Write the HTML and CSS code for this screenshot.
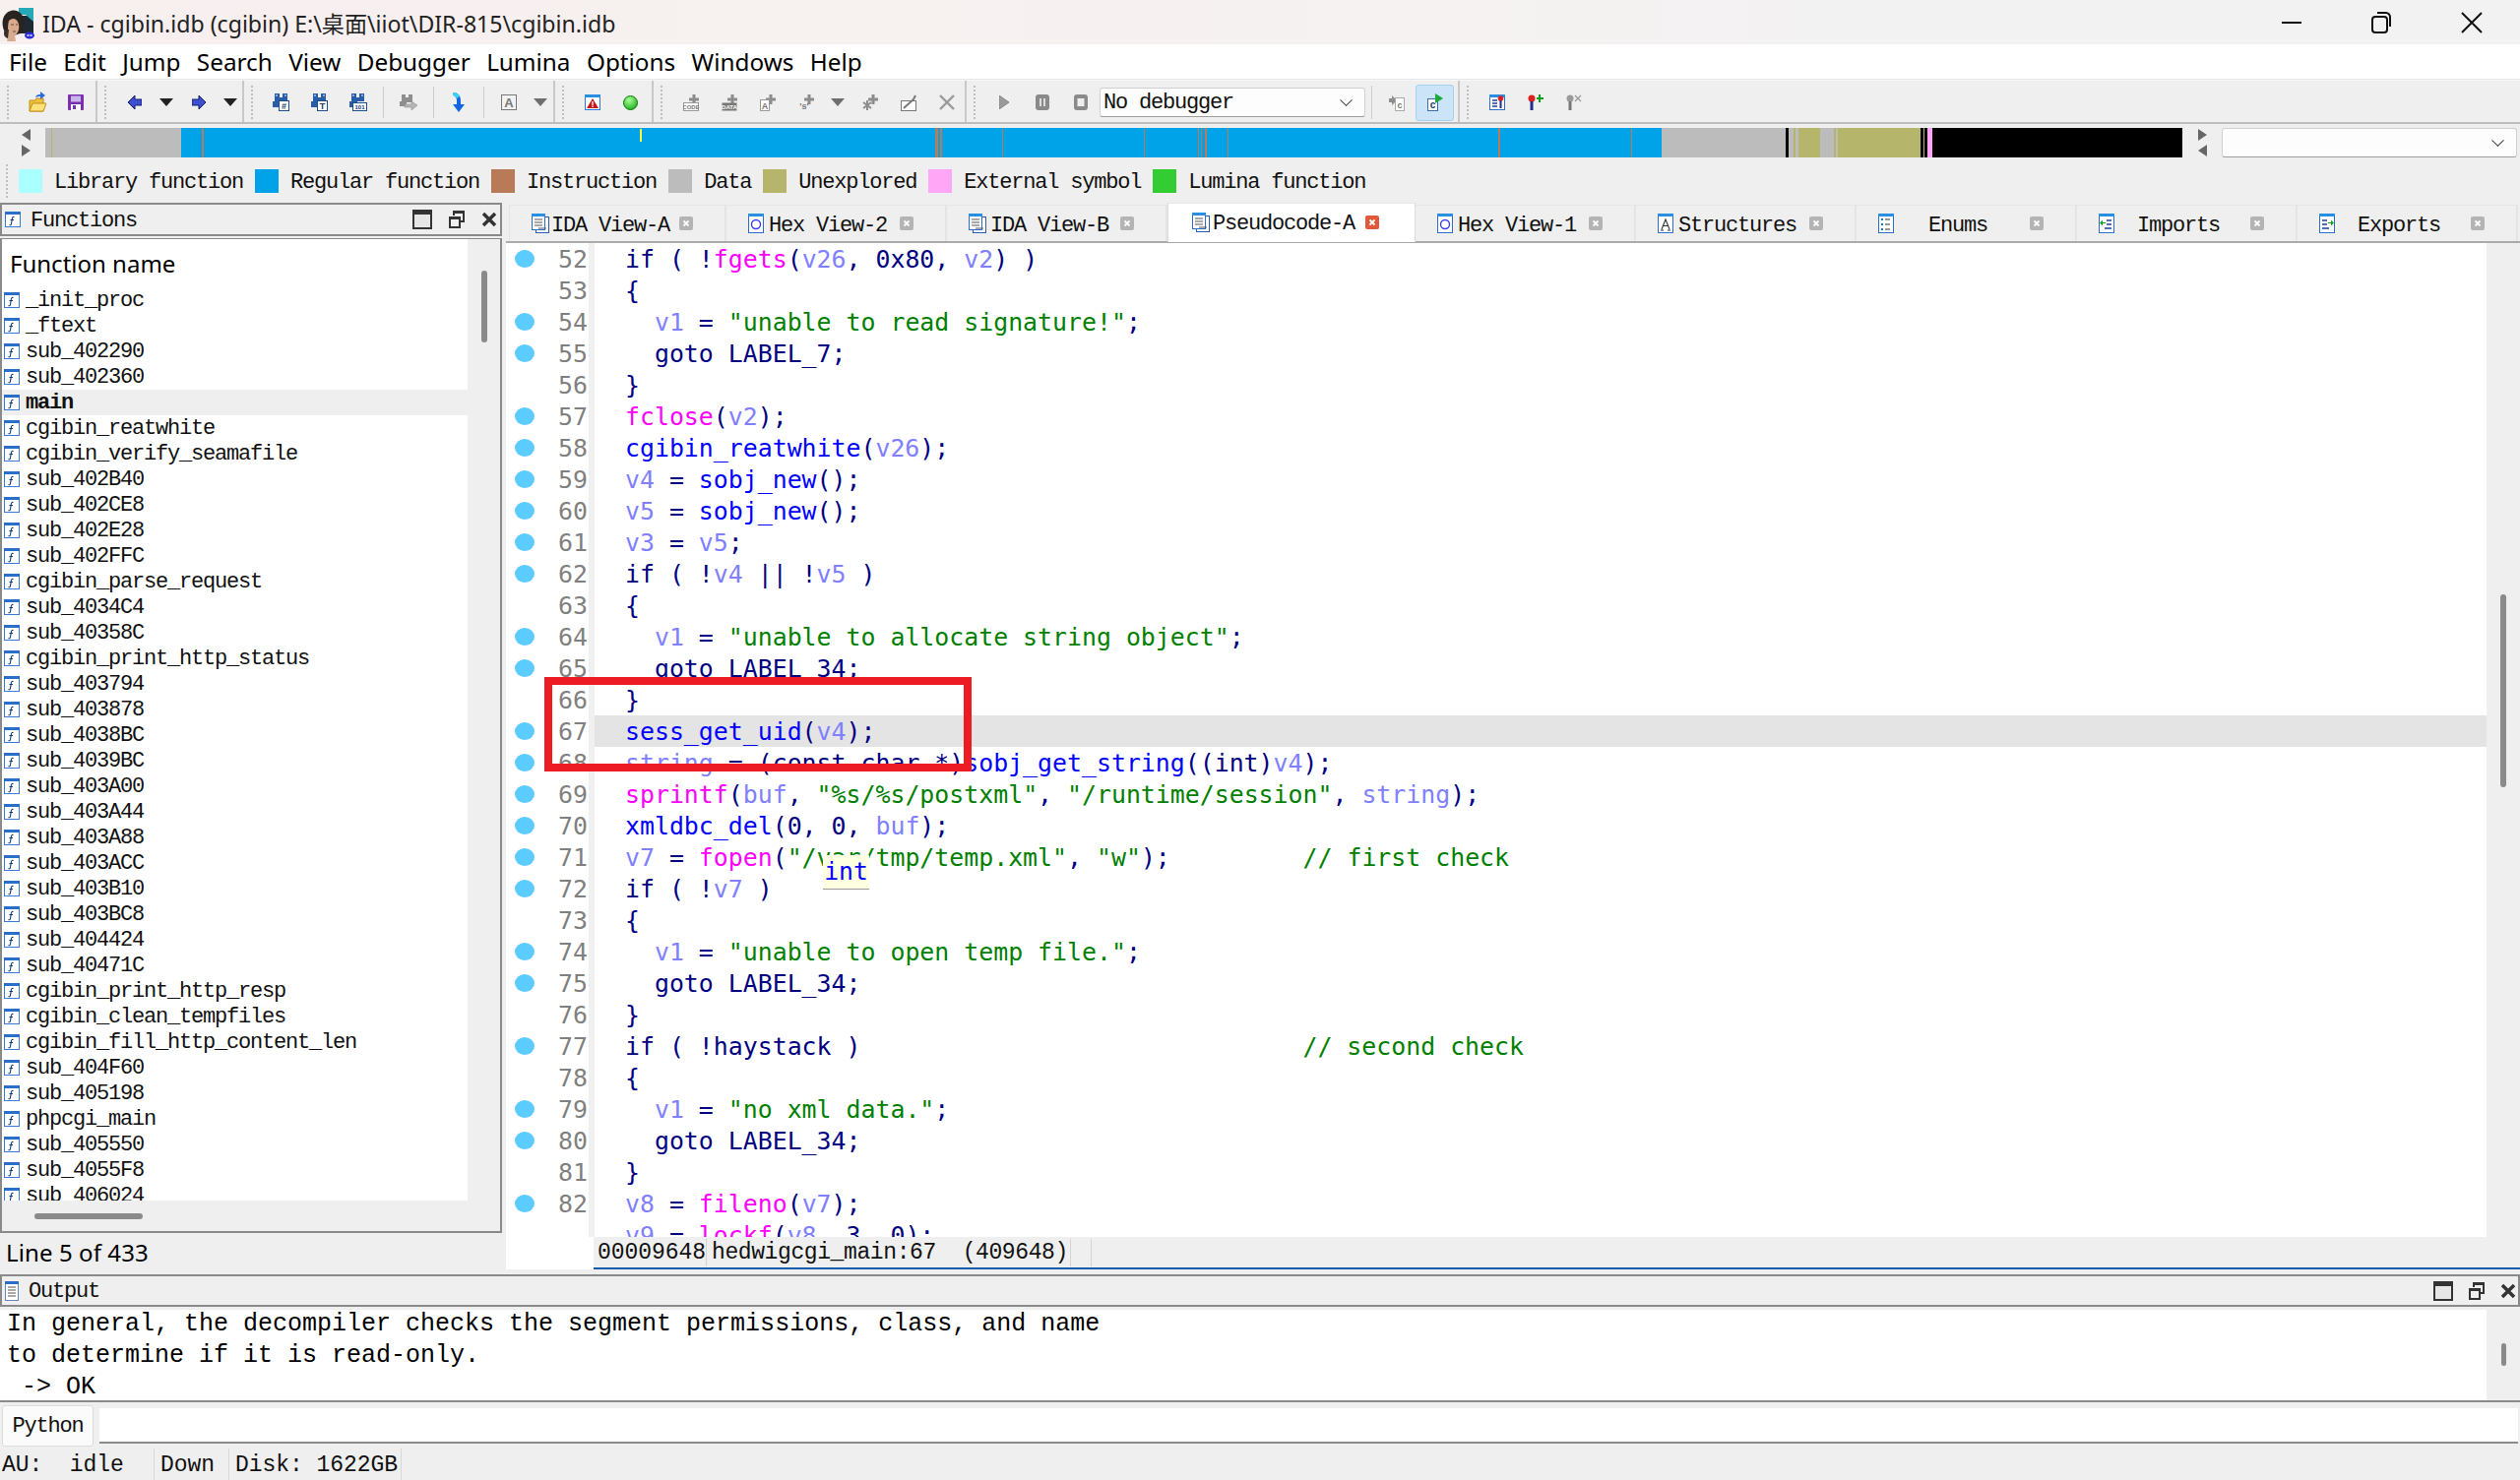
FILE: index.html
```html
<!DOCTYPE html>
<html lang="zh">
<head>
  <meta charset="UTF-8">
  <title>IDA - cgibin.idb (cgibin)</title>
  <link rel="stylesheet" href="styles.css">
</head>
<body>
<svg class="defs" width="0" height="0">
  <symbol id="i-func" viewBox="0 0 16 16">
    <rect x=".5" y=".5" width="15" height="15" fill="#fff" stroke="#3a7bd5"/>
    <rect x="0" y="0" width="16" height="3" fill="#2a6fc9"/>
    <path d="M9.5 5.5C8 5 7.5 6 7.3 7.5L6.5 12.5C6.3 14 5.5 14 4.5 13.5M5.5 8.5H9" fill="none" stroke="#123a7a" stroke-width="1.1"/>
  </symbol>
  <symbol id="i-doc" viewBox="0 0 18 20">
    <rect x="4.5" y="3.5" width="13" height="16" fill="#fff" stroke="#2a5cb0"/>
    <rect x=".5" y=".5" width="13" height="16" fill="#fff" stroke="#2a6fc9"/>
    <rect x="0" y="0" width="14" height="3" fill="#2a8fe0"/>
    <path d="M3 6H11M3 9H11M3 12H11M7 15H15" stroke="#555" stroke-width="1.2"/>
  </symbol>
  <symbol id="i-hex" viewBox="0 0 16 20">
    <rect x=".5" y=".5" width="15" height="19" fill="#fff" stroke="#2a6fc9"/>
    <rect x="0" y="0" width="16" height="3" fill="#2a8fe0"/>
    <circle cx="8" cy="11" r="4.5" fill="none" stroke="#3a3af0" stroke-width="1.4"/>
  </symbol>
  <symbol id="i-struct" viewBox="0 0 16 20">
    <rect x=".5" y=".5" width="15" height="19" fill="#fff" stroke="#2a6fc9"/>
    <rect x="0" y="0" width="16" height="3" fill="#2a8fe0"/>
    <path d="M4 16L8 6L12 16M5.5 12.5H10.5M3 17H6M10 17H13" fill="none" stroke="#333" stroke-width="1.1"/>
  </symbol>
  <symbol id="i-enum" viewBox="0 0 16 20">
    <rect x=".5" y=".5" width="15" height="19" fill="#fff" stroke="#2a6fc9"/>
    <rect x="0" y="0" width="16" height="3" fill="#2a8fe0"/>
    <path d="M7 6H12M7 11H12M7 16H12" stroke="#333" stroke-width="1.2"/>
    <path d="M3 6H5M3 11H5M3 16H5" stroke="#0a7bd0" stroke-width="2"/>
  </symbol>
  <symbol id="i-import" viewBox="0 0 16 20">
    <rect x=".5" y=".5" width="15" height="19" fill="#fff" stroke="#2a6fc9"/>
    <rect x="0" y="0" width="16" height="3" fill="#2a8fe0"/>
    <path d="M8 7H13M8 11H13M6 15H13" stroke="#1b3fa0" stroke-width="1.4"/>
    <path d="M7 9H4V6.500L1 9.500L4 12.500V10H7Z" fill="#1aa01a"/>
  </symbol>
  <symbol id="i-export" viewBox="0 0 16 20">
    <rect x=".5" y=".5" width="15" height="19" fill="#fff" stroke="#2a6fc9"/>
    <rect x="0" y="0" width="16" height="3" fill="#2a8fe0"/>
    <path d="M3 7H8M3 11H8M3 15H10" stroke="#1b3fa0" stroke-width="1.4"/>
    <path d="M9 9H12V6.500L15 9.500L12 12.500V10H9Z" fill="#1aa01a"/>
  </symbol>
  <symbol id="i-output" viewBox="0 0 14 20">
    <rect x=".5" y=".5" width="13" height="19" fill="#fff" stroke="#6a86b8"/>
    <rect x="0" y="0" width="14" height="3" fill="#2a6fc9"/>
    <path d="M3 6H11M3 9H11M3 12H11M3 15H11" stroke="#555" stroke-width="1.2"/>
  </symbol>
  <symbol id="i-bino" viewBox="0 0 18 20">
    <path d="M2 1H7V5H10V1H15V9H2Z M0 9H8V15H0Z" fill="#2a5da8"/>
    <path d="M3 3H5M12 3H14" stroke="#9cc4f0" stroke-width="1.5"/>
  </symbol>
  <symbol id="i-max" viewBox="0 0 20 20">
    <rect x="1" y="1" width="18" height="18" fill="#e6e6e6" stroke="#333" stroke-width="2"/>
    <rect x="0" y="0" width="20" height="5" fill="#333"/>
  </symbol>
  <symbol id="i-rest" viewBox="0 0 16 18">
    <path d="M5 5V1H15V11H11" fill="none" stroke="#333" stroke-width="2"/>
    <rect x="5" y="0" width="11" height="3" fill="#333"/>
    <rect x="1" y="7" width="10" height="10" fill="none" stroke="#333" stroke-width="2"/>
    <rect x="0" y="6" width="12" height="3" fill="#333"/>
  </symbol>
  <symbol id="i-close" viewBox="0 0 16 16">
    <path d="M2 2L14 14M14 2L2 14" stroke="#333" stroke-width="3.400"/>
  </symbol>
  <symbol id="i-tabx" viewBox="0 0 14 14">
    <rect width="14" height="14" rx="2" fill="#b4b4b4"/>
    <path d="M4.500 4.500L9.500 9.500M9.500 4.500L4.500 9.500" stroke="#fff" stroke-width="1.800"/>
  </symbol>
  <symbol id="i-plus" viewBox="0 0 10 10">
    <path d="M3.500 0H6.500V3.500H10V6.500H6.500V10H3.500V6.500H0V3.500H3.500Z" fill="#8c8c8c"/>
  </symbol>
</svg>

<div class="app">
  <header class="titlebar">
    <svg class="app-icon" width="36" height="36" viewBox="0 0 36 36">
      <path d="M20 10H34V28H20Z" fill="#1d2a33"/>
      <path d="M19 2H34V16L26 9H19Z" fill="#26a9b5"/>
      <path d="M5 27C0 17 3 7 11 5C18 3 23 8 25 15L24 27L14 30Z" fill="#2a2420"/>
      <path d="M9 15C13 11 18 13 19 19C20 24 18 28 15 30L16 36H7C9 30 7 22 9 15Z" fill="#d8aa8e"/>
      <path d="M5 24C3 28 4 32 8 33L9 24Z" fill="#3a2f28"/>
      <path d="M11 19H14M16 19H18M13 26H16" stroke="#6b4434" stroke-width="1"/>
      <ellipse cx="30" cy="30" rx="5" ry="3.500" fill="#2b2bd8"/>
      <path d="M27.500 30H32.500" stroke="#fff" stroke-width="1.500" stroke-dasharray="2 1"/>
    </svg>
    <span class="title-text">IDA - cgibin.idb (cgibin) E:\桌面\iiot\DIR-815\cgibin.idb</span>
    <div class="win-btns">
      <svg width="20" height="20" viewBox="0 0 20 20"><path d="M0 10H20" stroke="#111" stroke-width="2"/></svg>
      <svg width="20" height="22" viewBox="0 0 20 22"><rect x="1" y="5" width="15" height="16" rx="3" fill="none" stroke="#111" stroke-width="2"/><path d="M6 1H15C17 1 19 3 19 5V15" fill="none" stroke="#111" stroke-width="2"/></svg>
      <svg width="22" height="22" viewBox="0 0 22 22"><path d="M1 1L21 21M21 1L1 21" stroke="#111" stroke-width="2"/></svg>
    </div>
  </header>

  <nav class="menubar">
    <span>File</span><span>Edit</span><span>Jump</span><span>Search</span><span>View</span><span>Debugger</span><span>Lumina</span><span>Options</span><span>Windows</span><span>Help</span>
  </nav>

  <div class="toolbar">
    <div class="tb-group tb-g1">
      <i class="grip"></i>
      <div class="tb-btn"><svg width="18" height="22" viewBox="0 0 18 22"><path d="M1 9H7L8 7H15V20H1Z" fill="#f0c040" stroke="#c09010"/><path d="M1 20L4 12H18L15 20Z" fill="#ffe27a" stroke="#c09010"/><path d="M7 6C8 3 10 3 12 3V0L17 4L12 8V5C10 5 9 5 7 6Z" fill="#2a6fd8"/></svg></div>
      <div class="tb-btn"><svg width="16" height="16" viewBox="0 0 16 16"><rect width="16" height="16" rx="1" fill="#7a2fb5"/><rect x="3" y="1.500" width="10" height="6" fill="#c9b6e8"/><rect x="3" y="10" width="10" height="6" fill="#fff"/><rect x="5" y="11" width="3" height="4" fill="#7a2fb5"/></svg></div>
    </div>
    <div class="tb-group tb-g2">
      <i class="grip"></i>
      <div class="tb-btn"><svg width="14" height="14" viewBox="0 0 14 14"><path d="M0 7L7 0V4H14V10H7V14Z" fill="#3b4fd0" stroke="#14206e"/></svg></div>
      <div class="tb-dd"><i class="tri"></i></div>
      <div class="tb-btn"><svg width="14" height="14" viewBox="0 0 14 14"><path d="M14 7L7 0V4H0V10H7V14Z" fill="#3b4fd0" stroke="#14206e"/></svg></div>
      <div class="tb-dd"><i class="tri"></i></div>
    </div>
    <div class="tb-group tb-g3">
      <i class="grip"></i>
      <div class="tb-btn"><svg width="18" height="20"><use href="#i-bino"/><rect x="6.500" y="8.500" width="10" height="10" fill="#fff" stroke="#1c4f8a"/><text class="ico-text" x="11.500" y="17" font-size="9">#</text></svg></div>
      <div class="tb-btn"><svg width="18" height="20"><use href="#i-bino"/><rect x="6.500" y="8.500" width="10" height="10" fill="#fff" stroke="#1c4f8a"/><text class="ico-text" x="11.500" y="17" font-size="9">T</text></svg></div>
      <div class="tb-btn"><svg width="18" height="20"><use href="#i-bino"/><rect x="3.500" y="10.500" width="14" height="8" fill="#fff" stroke="#1c4f8a"/><text class="ico-text" x="10.500" y="17" font-size="6">101</text></svg></div>
      <i class="tb-sep"></i>
      <div class="tb-btn"><svg width="18" height="18" viewBox="0 0 18 18"><path d="M2 1H6V4H9V1H13V9H2Z M0 8H7V13H0Z" fill="#8e8e8e"/><path d="M5 11H12V8L18 12L12 17V14H5Z" fill="#b5b5b5" stroke="#8e8e8e" stroke-width=".6"/></svg></div>
      <i class="tb-sep"></i>
      <div class="tb-btn"><svg width="14" height="20" viewBox="0 0 14 20"><path d="M1 0C6 0 9 3 9 8V12H13L7 20L1 12H5V8C5 5 3 3 1 3Z" fill="#1466e0"/><path d="M1 0C5 0 7 2 8 4L5 6C4 4 3 3 1 3Z" fill="#35d5f5"/></svg></div>
      <i class="tb-sep"></i>
      <div class="tb-btn"><svg width="16" height="16" viewBox="0 0 16 16"><rect x=".5" y=".5" width="15" height="15" fill="#f2f2f2" stroke="#777"/><text class="ico-text ico-gray" x="8" y="13" font-size="13">A</text></svg></div>
      <div class="tb-dd"><i class="tri tri-gray"></i></div>
    </div>
    <div class="tb-group tb-g4">
      <i class="grip"></i>
      <div class="tb-btn"><svg width="16" height="16" viewBox="0 0 16 16"><rect x=".5" y=".5" width="15" height="15" fill="#fff" stroke="#2a7be0"/><rect width="16" height="3" fill="#2a8fe0"/><path d="M8 4L14 14H2Z" fill="#cc1414"/><rect x="7.300" y="7" width="1.400" height="4" fill="#fff"/><rect x="7.300" y="11.500" width="1.400" height="1.500" fill="#fff"/></svg></div>
      <div class="tb-btn"><svg width="15" height="15" viewBox="0 0 15 15"><defs><radialGradient id="g-led" cx=".4" cy=".3" r=".8"><stop offset="0" stop-color="#a8ff98"/><stop offset="1" stop-color="#12a812"/></radialGradient></defs><circle cx="7.500" cy="7.500" r="7" fill="url(#g-led)" stroke="#0b7a0b"/></svg></div>
    </div>
    <div class="tb-group tb-g5">
      <i class="grip"></i>
      <div class="tb-btn"><svg width="16" height="17" viewBox="0 0 16 17"><use href="#i-plus" x="6" y="0" width="10" height="10"/><rect x=".5" y="8.500" width="15" height="8" fill="#fff" stroke="#999"/><text class="ico-text ico-gray" x="8" y="15" font-size="6">CODE</text></svg></div>
      <div class="tb-btn"><svg width="16" height="17" viewBox="0 0 16 17"><use href="#i-plus" x="6" y="0" width="10" height="10"/><rect x=".5" y="8.500" width="15" height="8" fill="#777"/><text class="ico-text ico-white" x="8" y="15" font-size="6">DATA</text></svg></div>
      <div class="tb-btn"><svg width="16" height="17" viewBox="0 0 16 17"><use href="#i-plus" x="6" y="0" width="10" height="10"/><rect x=".5" y="5.500" width="9" height="11" fill="#fff" stroke="#999"/><text class="ico-text ico-gray" x="5" y="15" font-size="9">A</text></svg></div>
      <div class="tb-btn"><svg width="16" height="17" viewBox="0 0 16 17"><use href="#i-plus" x="6" y="0" width="10" height="10"/><text class="ico-text ico-gray" x="6" y="15" font-size="9">'s'</text></svg></div>
      <div class="tb-dd"><i class="tri tri-gray"></i></div>
      <div class="tb-btn"><svg width="16" height="17" viewBox="0 0 16 17"><use href="#i-plus" x="6" y="0" width="10" height="10"/><path d="M5 6V16M1 8L9 14M9 8L1 14" stroke="#8c8c8c" stroke-width="2"/></svg></div>
      <div class="tb-btn"><svg width="16" height="17" viewBox="0 0 16 17"><rect x=".5" y="6.500" width="15" height="10" fill="#fff" stroke="#777"/><path d="M3 14L13 5L15 1" stroke="#777" stroke-width="2" fill="none"/></svg></div>
      <div class="tb-btn"><svg width="16" height="16" viewBox="0 0 16 16"><path d="M1 1L15 15M15 1L1 15" stroke="#9a9a9a" stroke-width="2.400"/></svg></div>
    </div>
    <div class="tb-group tb-g6">
      <i class="grip"></i>
      <div class="tb-btn"><svg width="10" height="14" viewBox="0 0 10 14"><path d="M0 0L10 7L0 14Z" fill="#9a9a9a" stroke="#888"/></svg></div>
      <div class="tb-btn"><svg width="14" height="16" viewBox="0 0 14 16"><rect width="14" height="16" rx="3" fill="#8a8a8a"/><path d="M5 4V12M9 4V12" stroke="#ddd" stroke-width="2"/></svg></div>
      <div class="tb-btn"><svg width="14" height="16" viewBox="0 0 14 16"><rect width="14" height="16" rx="3" fill="#8a8a8a"/><rect x="3.500" y="4" width="7" height="8" fill="#eee"/></svg></div>
      <div class="combo combo-dbg"><span>No debugger</span><i class="chev"></i></div>
      <i class="tb-sep tb-sep-tall"></i>
      <div class="tb-btn"><svg width="16" height="18" viewBox="0 0 16 18"><path d="M0 5H3V2L8 7L3 12V9H0Z" fill="#8e8e8e"/><rect x="6.500" y="4.500" width="9" height="13" fill="#fff" stroke="#aaa"/><text class="ico-text ico-gray" x="11" y="15" font-size="9">c</text></svg></div>
      <div class="tb-btn tb-active"><svg width="16" height="18" viewBox="0 0 16 18"><rect x=".5" y="5.500" width="10" height="12" fill="#fff" stroke="#3d6ab0"/><text class="ico-text" x="5.500" y="15" font-size="10">c</text><path d="M8 0L16 5L8 10Z" fill="#1ea83a"/></svg></div>
    </div>
    <div class="tb-group tb-g7">
      <i class="grip"></i>
      <div class="tb-btn"><svg width="16" height="16" viewBox="0 0 16 16"><rect x=".5" y=".5" width="15" height="15" fill="#fff" stroke="#2a6fc9"/><rect width="16" height="3" fill="#2a8fe0"/><path d="M3 6H8M3 9H8M3 12H8" stroke="#1b3fa0" stroke-width="1.300"/><circle cx="11.500" cy="4" r="2.800" fill="#e02020"/><rect x="10.500" y="6" width="2" height="8" fill="#222c8a"/></svg></div>
      <div class="tb-btn"><svg width="16" height="16" viewBox="0 0 16 16"><circle cx="4" cy="4" r="3.500" fill="#e02020"/><rect x="2.500" y="7" width="3" height="9" fill="#222c8a"/><path d="M9 3H11V0H13V3H16V5H13V8H11V5H9Z" fill="#0e9c1e"/></svg></div>
      <div class="tb-btn"><svg width="16" height="16" viewBox="0 0 16 16"><circle cx="4" cy="4" r="3.500" fill="#9a9a9a"/><rect x="2.500" y="7" width="3" height="9" fill="#777"/><path d="M9 1L15 7M15 1L9 7" stroke="#9a9a9a" stroke-width="1.300"/></svg></div>
    </div>
  </div>

  <section class="navband">
    <div class="nav-row">
      <div class="nav-arrows">
        <i class="arrow-left"></i>
        <i class="arrow-right"></i>
      </div>
      <div class="nav-strip"><i class="nav-pos"></i></div>
      <div class="nav-arrows nav-arrows-r">
        <i class="arrow-right"></i>
        <i class="arrow-left"></i>
      </div>
      <div class="combo combo-nav"><span></span><i class="chev"></i></div>
    </div>
    <div class="legend">
      <i class="grip grip-legend"></i>
      <i class="sw sw-lib"></i><span>Library function</span>
      <i class="sw sw-reg"></i><span>Regular function</span>
      <i class="sw sw-ins"></i><span>Instruction</span>
      <i class="sw sw-data"></i><span>Data</span>
      <i class="sw sw-unexp"></i><span>Unexplored</span>
      <i class="sw sw-ext"></i><span>External symbol</span>
      <i class="sw sw-lum"></i><span>Lumina function</span>
    </div>
  </section>

  <div class="workspace">
    <aside class="functions">
      <div class="panel-title">
        <svg class="panel-icon" width="16" height="16"><use href="#i-func"/></svg>
        <span class="panel-name">Functions</span>
        <div class="panel-btns">
          <svg width="20" height="20"><use href="#i-max"/></svg>
          <svg width="16" height="18"><use href="#i-rest"/></svg>
          <svg width="16" height="16"><use href="#i-close"/></svg>
        </div>
      </div>
      <div class="func-pane">
        <div class="func-main">
          <div class="func-list">
            <div class="func-head">Function name</div>
            <div class="fn"><svg width="16" height="16"><use href="#i-func"/></svg>_init_proc</div>
            <div class="fn"><svg width="16" height="16"><use href="#i-func"/></svg>_ftext</div>
            <div class="fn"><svg width="16" height="16"><use href="#i-func"/></svg>sub_402290</div>
            <div class="fn"><svg width="16" height="16"><use href="#i-func"/></svg>sub_402360</div>
            <div class="fn fn-sel"><svg width="16" height="16"><use href="#i-func"/></svg>main</div>
            <div class="fn"><svg width="16" height="16"><use href="#i-func"/></svg>cgibin_reatwhite</div>
            <div class="fn"><svg width="16" height="16"><use href="#i-func"/></svg>cgibin_verify_seamafile</div>
            <div class="fn"><svg width="16" height="16"><use href="#i-func"/></svg>sub_402B40</div>
            <div class="fn"><svg width="16" height="16"><use href="#i-func"/></svg>sub_402CE8</div>
            <div class="fn"><svg width="16" height="16"><use href="#i-func"/></svg>sub_402E28</div>
            <div class="fn"><svg width="16" height="16"><use href="#i-func"/></svg>sub_402FFC</div>
            <div class="fn"><svg width="16" height="16"><use href="#i-func"/></svg>cgibin_parse_request</div>
            <div class="fn"><svg width="16" height="16"><use href="#i-func"/></svg>sub_4034C4</div>
            <div class="fn"><svg width="16" height="16"><use href="#i-func"/></svg>sub_40358C</div>
            <div class="fn"><svg width="16" height="16"><use href="#i-func"/></svg>cgibin_print_http_status</div>
            <div class="fn"><svg width="16" height="16"><use href="#i-func"/></svg>sub_403794</div>
            <div class="fn"><svg width="16" height="16"><use href="#i-func"/></svg>sub_403878</div>
            <div class="fn"><svg width="16" height="16"><use href="#i-func"/></svg>sub_4038BC</div>
            <div class="fn"><svg width="16" height="16"><use href="#i-func"/></svg>sub_4039BC</div>
            <div class="fn"><svg width="16" height="16"><use href="#i-func"/></svg>sub_403A00</div>
            <div class="fn"><svg width="16" height="16"><use href="#i-func"/></svg>sub_403A44</div>
            <div class="fn"><svg width="16" height="16"><use href="#i-func"/></svg>sub_403A88</div>
            <div class="fn"><svg width="16" height="16"><use href="#i-func"/></svg>sub_403ACC</div>
            <div class="fn"><svg width="16" height="16"><use href="#i-func"/></svg>sub_403B10</div>
            <div class="fn"><svg width="16" height="16"><use href="#i-func"/></svg>sub_403BC8</div>
            <div class="fn"><svg width="16" height="16"><use href="#i-func"/></svg>sub_404424</div>
            <div class="fn"><svg width="16" height="16"><use href="#i-func"/></svg>sub_40471C</div>
            <div class="fn"><svg width="16" height="16"><use href="#i-func"/></svg>cgibin_print_http_resp</div>
            <div class="fn"><svg width="16" height="16"><use href="#i-func"/></svg>cgibin_clean_tempfiles</div>
            <div class="fn"><svg width="16" height="16"><use href="#i-func"/></svg>cgibin_fill_http_content_len</div>
            <div class="fn"><svg width="16" height="16"><use href="#i-func"/></svg>sub_404F60</div>
            <div class="fn"><svg width="16" height="16"><use href="#i-func"/></svg>sub_405198</div>
            <div class="fn"><svg width="16" height="16"><use href="#i-func"/></svg>phpcgi_main</div>
            <div class="fn"><svg width="16" height="16"><use href="#i-func"/></svg>sub_405550</div>
            <div class="fn"><svg width="16" height="16"><use href="#i-func"/></svg>sub_4055F8</div>
            <div class="fn"><svg width="16" height="16"><use href="#i-func"/></svg>sub_406024</div>
          </div>
          <div class="vscroll vscroll-func"><i class="thumb"></i></div>
        </div>
        <div class="hscroll"><i class="thumb"></i></div>
      </div>
      <div class="func-status">Line 5 of 433</div>
    </aside>

    <section class="views">
      <div class="tabs">
        <div class="tab tab-first"><svg width="18" height="20"><use href="#i-doc"/></svg><span>IDA View-A</span><svg width="14" height="14"><use href="#i-tabx"/></svg></div>
        <div class="tab"><svg width="16" height="20"><use href="#i-hex"/></svg><span>Hex View-2</span><svg width="14" height="14"><use href="#i-tabx"/></svg></div>
        <div class="tab"><svg width="18" height="20"><use href="#i-doc"/></svg><span>IDA View-B</span><svg width="14" height="14"><use href="#i-tabx"/></svg></div>
        <div class="tab tab-active"><svg width="18" height="20"><use href="#i-doc"/></svg><span>Pseudocode-A</span><svg width="14" height="14" viewBox="0 0 14 14"><rect width="14" height="14" rx="2" fill="#e0593a"/><path d="M4.500 4.500L9.500 9.500M9.500 4.500L4.500 9.500" stroke="#fff" stroke-width="1.800"/></svg></div>
        <div class="tab"><svg width="16" height="20"><use href="#i-hex"/></svg><span>Hex View-1</span><svg width="14" height="14"><use href="#i-tabx"/></svg></div>
        <div class="tab"><svg width="16" height="20"><use href="#i-struct"/></svg><span>Structures</span><svg width="14" height="14"><use href="#i-tabx"/></svg></div>
        <div class="tab"><svg width="16" height="20"><use href="#i-enum"/></svg><span>Enums</span><svg width="14" height="14"><use href="#i-tabx"/></svg></div>
        <div class="tab"><svg width="16" height="20"><use href="#i-import"/></svg><span>Imports</span><svg width="14" height="14"><use href="#i-tabx"/></svg></div>
        <div class="tab"><svg width="16" height="20"><use href="#i-export"/></svg><span>Exports</span><svg width="14" height="14"><use href="#i-tabx"/></svg></div>
      </div>

      <div class="editor">
        <div class="editor-main">
          <div class="code">
            <div class="ln"><i class="dot"></i><b class="num">52</b><pre class="src">if ( !<span class="l">fgets</span>(<span class="v">v26</span>, 0x80, <span class="v">v2</span>) )</pre></div>
            <div class="ln"><i class="nodot"></i><b class="num">53</b><pre class="src">{</pre></div>
            <div class="ln"><i class="dot"></i><b class="num">54</b><pre class="src">  <span class="v">v1</span> = <span class="s">"unable to read signature!"</span>;</pre></div>
            <div class="ln"><i class="dot"></i><b class="num">55</b><pre class="src">  goto LABEL_7;</pre></div>
            <div class="ln"><i class="nodot"></i><b class="num">56</b><pre class="src">}</pre></div>
            <div class="ln"><i class="dot"></i><b class="num">57</b><pre class="src"><span class="l">fclose</span>(<span class="v">v2</span>);</pre></div>
            <div class="ln"><i class="dot"></i><b class="num">58</b><pre class="src"><span class="f">cgibin_reatwhite</span>(<span class="v">v26</span>);</pre></div>
            <div class="ln"><i class="dot"></i><b class="num">59</b><pre class="src"><span class="v">v4</span> = <span class="f">sobj_new</span>();</pre></div>
            <div class="ln"><i class="dot"></i><b class="num">60</b><pre class="src"><span class="v">v5</span> = <span class="f">sobj_new</span>();</pre></div>
            <div class="ln"><i class="dot"></i><b class="num">61</b><pre class="src"><span class="v">v3</span> = <span class="v">v5</span>;</pre></div>
            <div class="ln"><i class="dot"></i><b class="num">62</b><pre class="src">if ( !<span class="v">v4</span> || !<span class="v">v5</span> )</pre></div>
            <div class="ln"><i class="nodot"></i><b class="num">63</b><pre class="src">{</pre></div>
            <div class="ln"><i class="dot"></i><b class="num">64</b><pre class="src">  <span class="v">v1</span> = <span class="s">"unable to allocate string object"</span>;</pre></div>
            <div class="ln"><i class="dot"></i><b class="num">65</b><pre class="src">  goto LABEL_34;</pre></div>
            <div class="ln"><i class="nodot"></i><b class="num">66</b><pre class="src">}</pre></div>
            <div class="ln ln-cur"><i class="dot"></i><b class="num">67</b><pre class="src"><span class="f">sess_get_uid</span>(<span class="v">v4</span>);</pre></div>
            <div class="ln"><i class="dot"></i><b class="num">68</b><pre class="src"><span class="v">string</span> = (const char *)<span class="f">sobj_get_string</span>((int)<span class="v">v4</span>);</pre></div>
            <div class="ln"><i class="dot"></i><b class="num">69</b><pre class="src"><span class="l">sprintf</span>(<span class="v">buf</span>, <span class="s">"%s/%s/postxml"</span>, <span class="s">"/runtime/session"</span>, <span class="v">string</span>);</pre></div>
            <div class="ln"><i class="dot"></i><b class="num">70</b><pre class="src"><span class="f">xmldbc_del</span>(0, 0, <span class="v">buf</span>);</pre></div>
            <div class="ln"><i class="dot"></i><b class="num">71</b><pre class="src"><span class="v">v7</span> = <span class="l">fopen</span>(<span class="s">"/var/tmp/temp.xml"</span>, <span class="s">"w"</span>);         <span class="s">// first check</span></pre></div>
            <div class="ln"><i class="dot"></i><b class="num">72</b><pre class="src">if ( !<span class="v">v7</span> )</pre></div>
            <div class="ln"><i class="nodot"></i><b class="num">73</b><pre class="src">{</pre></div>
            <div class="ln"><i class="dot"></i><b class="num">74</b><pre class="src">  <span class="v">v1</span> = <span class="s">"unable to open temp file."</span>;</pre></div>
            <div class="ln"><i class="dot"></i><b class="num">75</b><pre class="src">  goto LABEL_34;</pre></div>
            <div class="ln"><i class="nodot"></i><b class="num">76</b><pre class="src">}</pre></div>
            <div class="ln"><i class="dot"></i><b class="num">77</b><pre class="src">if ( !haystack )                              <span class="s">// second check</span></pre></div>
            <div class="ln"><i class="nodot"></i><b class="num">78</b><pre class="src">{</pre></div>
            <div class="ln"><i class="dot"></i><b class="num">79</b><pre class="src">  <span class="v">v1</span> = <span class="s">"no xml data."</span>;</pre></div>
            <div class="ln"><i class="dot"></i><b class="num">80</b><pre class="src">  goto LABEL_34;</pre></div>
            <div class="ln"><i class="nodot"></i><b class="num">81</b><pre class="src">}</pre></div>
            <div class="ln"><i class="dot"></i><b class="num">82</b><pre class="src"><span class="v">v8</span> = <span class="l">fileno</span>(<span class="v">v7</span>);</pre></div>
            <div class="ln"><i class="nodot"></i><b class="num"></b><pre class="src"><span class="v">v9</span> = <span class="l">lockf</span>(<span class="v">v8</span>, 3, 0);</pre></div>
          </div>
          <div class="code-status">
            <span class="cs-addr">00009648</span>
            <span class="cs-loc">hedwigcgi_main:67  (409648)</span>
            <span class="cs-blank"></span>
          </div>
        </div>
        <div class="vscroll vscroll-code"><i class="thumb"></i></div>
        <div class="mark-box"></div>
        <pre class="hint">int</pre>
      </div>
    </section>
  </div>

  <section class="output">
    <div class="panel-title">
      <svg class="panel-icon" width="14" height="20"><use href="#i-output"/></svg>
      <span class="panel-name">Output</span>
      <div class="panel-btns">
        <svg width="20" height="20"><use href="#i-max"/></svg>
        <svg width="16" height="18"><use href="#i-rest"/></svg>
        <svg width="16" height="16"><use href="#i-close"/></svg>
      </div>
    </div>
    <div class="output-body">
      <pre class="output-text">In general, the decompiler checks the segment permissions, class, and name
to determine if it is read-only.
 -&gt; OK</pre>
      <div class="vscroll vscroll-out"><i class="thumb"></i></div>
    </div>
  </section>

  <div class="cli">
    <div class="cli-btn">Python</div>
    <div class="cli-input"></div>
  </div>

  <footer class="statusbar">
    <span class="st-au">AU:  idle</span>
    <span class="st-down">Down</span>
    <span class="st-disk">Disk: 1622GB</span>
  </footer>
</div>
</body>
</html>
```

FILE: styles.css
```css
/* base */
html, body {
  margin: 0;
  padding: 0;
  background-color: #efefef;
}
.defs {
  position: absolute;
}
.app {
  width: 2560px;
  height: 1504px;
  overflow: hidden;
  display: flex;
  flex-direction: column;
  font-family: "Liberation Mono", "Noto Sans CJK SC", monospace;
  font-size: 22px;
  letter-spacing: -1.2px;
  color: #111;
}
pre {
  margin: 0;
  font: inherit;
}
svg {
  display: block;
  flex: none;
}
.ico-text {
  font-family: "Liberation Sans", sans-serif;
  font-weight: bold;
  letter-spacing: 0;
  text-anchor: middle;
  fill: #14406e;
}
.ico-gray {
  fill: #777;
}
.ico-white {
  fill: #fff;
}

/* title bar */
.titlebar {
  height: 45px;
  display: flex;
  align-items: center;
  background: linear-gradient(90deg, #f8efef 0%, #f6f1f0 45%, #f2f2f2 80%);
  font-family: "Noto Sans", "Noto Sans CJK SC", sans-serif;
  font-size: 23.1px;
  letter-spacing: 0;
}
.app-icon {
  margin: 3px 7px 0 0;
}
.title-text {
  color: #222;
}
.win-btns {
  margin-left: auto;
  display: flex;
  align-items: center;
  gap: 71px;
  padding-right: 38px;
}

/* menu */
.menubar {
  height: 35px;
  background-color: #fff;
  border-bottom: 1px solid #e6e6e6;
  display: flex;
  align-items: center;
  gap: 16.4px;
  padding-left: 9px;
  font-family: "Noto Sans", sans-serif;
  font-size: 24.3px;
  letter-spacing: 0;
  color: #000;
}

/* toolbar */
.toolbar {
  height: 42px;
  display: flex;
  border-top: 1px solid #f7f7f7;
  border-bottom: 2px solid #bdbdbd;
}
.tb-group {
  display: flex;
  align-items: center;
  box-sizing: border-box;
  padding-top: 2px;
  border-right: 2px solid #c8c8c8;
  flex: none;
}
.tb-g1 {
  width: 99px;
}
.tb-g2 {
  width: 149px;
}
.tb-g3 {
  width: 316px;
}
.tb-g4 {
  width: 100px;
}
.tb-g5 {
  width: 318px;
}
.tb-g6 {
  width: 501px;
}
.tb-g7 {
  border-right: none;
}
.grip {
  width: 0;
  height: 34px;
  margin: 0 9px 0 7px;
  border-left: 2px dotted #c0c0c0;
  flex: none;
}
.tb-btn {
  width: 39px;
  height: 37px;
  display: flex;
  align-items: center;
  justify-content: center;
  flex: none;
  box-sizing: border-box;
}
.tb-active {
  background-color: #cce4f7;
  border: 1px solid #a6d0f0;
  border-radius: 3px;
}
.tb-dd {
  width: 26px;
  display: flex;
  justify-content: center;
  flex: none;
}
.tri {
  width: 0;
  height: 0;
  border-left: 7px solid transparent;
  border-right: 7px solid transparent;
  border-top: 8px solid #222;
}
.tri-gray {
  border-top-color: #6e6e6e;
}
.tb-sep {
  width: 12px;
  height: 32px;
  flex: none;
  background: linear-gradient(#ccc, #ccc) center / 1px 100% no-repeat;
}
.tb-sep-tall {
  height: 34px;
}
.combo {
  background-color: #fdfdfd;
  border: 1px solid #d0d0d0;
  border-bottom-color: #9e9e9e;
  border-radius: 3px;
  box-sizing: border-box;
  display: flex;
  align-items: center;
  justify-content: space-between;
  flex: none;
}
.combo-dbg {
  width: 270px;
  height: 30px;
  padding: 0 14px 0 3px;
}
.combo-nav {
  width: 300px;
  height: 30px;
  padding-right: 14px;
}
.chev {
  width: 8px;
  height: 8px;
  border-right: 1px solid #444;
  border-bottom: 1px solid #444;
  transform: rotate(45deg) translate(-2px, -2px);
}

/* navigation band and legend */
.navband {
  height: 80px;
}
.nav-row {
  height: 30px;
  margin-top: 2px;
  padding-top: 2px;
  display: flex;
  align-items: center;
}
.nav-arrows {
  width: 46px;
  height: 30px;
  display: flex;
  flex-direction: column;
  align-items: center;
  justify-content: center;
  gap: 4px;
  flex: none;
  padding-left: 6px;
  box-sizing: border-box;
}
.nav-arrows-r {
  width: 40px;
  padding-left: 0;
}
.arrow-left, .arrow-right {
  width: 0;
  height: 0;
  border-top: 6px solid transparent;
  border-bottom: 6px solid transparent;
}
.arrow-left {
  border-right: 9px solid #666;
}
.arrow-right {
  border-left: 9px solid #666;
}
.nav-strip {
  position: relative;
  width: 2171px;
  height: 30px;
  flex: none;
  background: linear-gradient(90deg,
    #bcbcbc 0 6px, #b5b56b 6px 7px, #bcbcbc 7px 138px,
    #00a2e8 138px 159px, #b97a57 159px 161px, #00a2e8 161px 904px,
    #b97a57 904px 907px, #00a2e8 907px 909px, #b97a57 909px 911px, #00a2e8 911px 972px,
    #b97a57 972px 973px, #00a2e8 973px 1116px, #b97a57 1116px 1117px, #00a2e8 1117px 1171px,
    #b97a57 1171px 1172px, #00a2e8 1172px 1174px, #b97a57 1174px 1175px, #00a2e8 1175px 1178px,
    #b97a57 1178px 1180px, #00a2e8 1180px 1201px, #b97a57 1201px 1202px, #00a2e8 1202px 1476px,
    #b97a57 1476px 1478px, #00a2e8 1478px 1611px, #b97a57 1611px 1612px, #00a2e8 1612px 1642px,
    #bcbcbc 1642px 1768px, #000 1768px 1771px, #bcbcbc 1771px 1776px, #b5b56b 1776px 1778px,
    #bcbcbc 1778px 1781px, #b5b56b 1781px 1803px, #bcbcbc 1803px 1817px, #b5b56b 1817px 1819px,
    #bcbcbc 1819px 1821px, #b5b56b 1821px 1905px, #000 1905px 1908px, #b5b56b 1908px 1909px,
    #000 1909px 1912px, #ffa6f7 1912px 1917px, #000 1917px 2171px);
}
.nav-pos {
  position: absolute;
  left: 604px;
  top: 1px;
  width: 2px;
  height: 13px;
  background-color: #ffff40;
}
.legend {
  height: 24px;
  margin-top: 12px;
  display: flex;
  align-items: center;
  gap: 12px;
  white-space: pre;
}
.legend span {
  padding-top: 2px;
}
.grip-legend {
  height: 34px;
  margin: 0 -1px 0 6px;
}
.sw {
  width: 24px;
  height: 24px;
  flex: none;
}
.sw-lib { background-color: #aaffff; }
.sw-reg { background-color: #00a2e8; }
.sw-ins { background-color: #b97a57; }
.sw-data { background-color: #bcbcbc; }
.sw-unexp { background-color: #b5b56b; }
.sw-ext { background-color: #ffa6f7; }
.sw-lum { background-color: #33cc33; }

/* workspace */
.workspace {
  height: 1088px;
  display: flex;
}
.functions {
  width: 510px;
  flex: none;
  display: flex;
  flex-direction: column;
}
.panel-title {
  height: 34px;
  box-sizing: border-box;
  border: 2px solid #8a8a8a;
  background-color: #efefef;
  display: flex;
  align-items: center;
  flex: none;
  padding-left: 2px;
}
.panel-icon {
  margin-right: 10px;
  margin-left: 1px;
}
.panel-name {
  padding-top: 2px;
}
.panel-btns {
  margin-left: auto;
  display: flex;
  align-items: center;
  gap: 17px;
  padding-right: 3px;
}
.func-pane {
  margin-top: 2px;
  height: 1011px;
  box-sizing: border-box;
  border: 2px solid #8a8a8a;
  border-top-width: 1px;
  display: flex;
  flex-direction: column;
  flex: none;
}
.func-main {
  height: 977px;
  display: flex;
  flex: none;
}
.func-list {
  width: 473px;
  flex: none;
  overflow: hidden;
  background-color: #fff;
}
.func-head {
  height: 49px;
  display: flex;
  align-items: center;
  padding-left: 8px;
  font-family: "Noto Sans", sans-serif;
  font-size: 24px;
  letter-spacing: 0;
  color: #000;
}
.fn {
  height: 26px;
  display: flex;
  align-items: center;
  gap: 6px;
  padding-left: 2px;
  white-space: pre;
}
.fn-sel {
  background-color: #efefef;
  font-weight: bold;
}
.vscroll {
  flex: 1;
  background-color: #efefef;
  display: flex;
  justify-content: center;
}
.thumb {
  display: block;
  background-color: #8a8a8a;
  border-radius: 3px;
  width: 6px;
}
.vscroll-func .thumb {
  height: 73px;
  margin-top: 32px;
}
.hscroll {
  flex: 1;
  padding: 13px 0 0 33px;
}
.hscroll .thumb {
  width: 110px;
  height: 6px;
}
.func-status {
  height: 39px;
  display: flex;
  align-items: center;
  padding-left: 6px;
  font-family: "Noto Sans", sans-serif;
  font-size: 24px;
  letter-spacing: 0.1px;
  color: #000;
}

/* views */
.views {
  flex: 1;
  margin-left: 4px;
  display: flex;
  flex-direction: column;
  min-width: 0;
}
.tabs {
  height: 41px;
  display: flex;
  align-items: flex-end;
  border-bottom: 2px solid #ababab;
  box-sizing: border-box;
  flex: none;
  padding-left: 3px;
}
.tab {
  width: 224px;
  height: 37px;
  box-sizing: border-box;
  display: flex;
  align-items: center;
  justify-content: space-between;
  padding: 0 32px 0 22px;
  border-right: 2px solid #e4e4e4;
  border-top: 1px solid #e6e6e6;
  white-space: pre;
}
.tab span {
  padding-top: 4px;
  margin-right: 8px;
}
.tab-first {
  width: 221px;
  border-left: 1px solid #e4e4e4;
}
.tab-active {
  width: 252px;
  height: 40px;
  background-color: #fff;
  margin-bottom: -1px;
  padding: 0 36px 2px 24px;
  border-right: 1px solid #dcdcdc;
  border-left: 1px solid #dcdcdc;
}
.editor {
  position: relative;
  height: 1043px;
  display: flex;
  flex: none;
}
.editor-main {
  width: 2012px;
  flex: none;
  display: flex;
  flex-direction: column;
  box-sizing: border-box;
  background-color: #fff;
}
.code {
  height: 1010px;
  overflow: hidden;
  flex: none;
}
.ln {
  height: 32px;
  display: flex;
  align-items: center;
  font-family: "DejaVu Sans Mono", monospace;
  font-size: 24.87px;
  letter-spacing: 0;
}
.dot, .nodot {
  width: 20px;
  height: 18px;
  margin-left: 9px;
  flex: none;
}
.dot {
  border-radius: 50%;
  background-color: #5ccbff;
}
.num {
  width: 54px;
  padding-top: 2px;
  line-height: 32px;
  text-align: right;
  color: #808080;
  font-weight: normal;
  flex: none;
}
.src {
  flex: 1;
  height: 32px;
  line-height: 34px;
  margin-left: 1px;
  padding-left: 31px;
  border-left: 6px solid #f0f0f0;
  background-clip: padding-box;
  color: #000080;
  white-space: pre;
}
.ln-cur .src {
  background-color: #e4e4e4;
}
.v { color: #7f7fff; }
.f { color: #0000ff; }
.l { color: #ff00ff; }
.s { color: #008000; }
.code-status {
  height: 33px;
  margin-left: 89px;
  box-sizing: border-box;
  background-color: #efefef;
  border-bottom: 2px solid #0b5cad;
  display: flex;
  align-items: center;
  font-size: 23px;
  letter-spacing: 0;
}
.cs-addr {
  width: 115px;
  padding-left: 4px;
  box-sizing: border-box;
  border-right: 1px solid #d4d4d4;
  line-height: 28px;
  letter-spacing: -.05px;
}
.cs-loc {
  width: 370px;
  padding-left: 5px;
  box-sizing: border-box;
  border-right: 1px solid #d4d4d4;
  line-height: 28px;
  white-space: pre;
  letter-spacing: -.4px;
}
.cs-blank {
  width: 20px;
  height: 28px;
  border-right: 1px solid #d4d4d4;
}
.vscroll-code {
  border-bottom: 2px solid #0b5cad;
}
.vscroll-code .thumb {
  height: 196px;
  margin-top: 357px;
}
.mark-box {
  position: absolute;
  left: 39px;
  top: 441px;
  width: 434px;
  height: 96px;
  box-sizing: border-box;
  border: 8px solid #ed1c24;
}
.hint {
  position: absolute;
  left: 322px;
  top: 622px;
  width: 47px;
  height: 35px;
  box-sizing: border-box;
  background-color: #ffffe1;
  border-bottom: 1px solid #999;
  font-family: "DejaVu Sans Mono", monospace;
  font-size: 24.75px;
  letter-spacing: 0;
  line-height: 34px;
  text-align: center;
  color: #0000ff;
}

/* output */
.output {
  margin-top: 1px;
  height: 130px;
  flex: none;
}
.output .panel-title {
  height: 33px;
}
.output .panel-btns {
  gap: 16px;
  padding-right: 2px;
}
.output-body {
  margin-top: 3px;
  height: 94px;
  box-sizing: border-box;
  border-bottom: 2px solid #8a8a8a;
  display: flex;
  background-color: #fff;
}
.output-text {
  width: 2526px;
  flex: none;
  padding-left: 7px;
  box-sizing: border-box;
  font-size: 25px;
  letter-spacing: 0;
  line-height: 32px;
  color: #000;
  white-space: pre;
  margin-top: -1px;
  height: 92px;
  overflow: hidden;
}
.vscroll-out .thumb {
  height: 23px;
  margin-top: 34px;
  width: 5px;
}

/* command line */
.cli {
  height: 47px;
  display: flex;
  align-items: center;
  gap: 6px;
  padding: 0 2px;
  flex: none;
}
.cli-btn {
  width: 93px;
  height: 42px;
  box-sizing: border-box;
  background-color: #fbfbfb;
  border: 1px solid #dcdcdc;
  border-radius: 3px;
  display: flex;
  align-items: center;
  justify-content: center;
  flex: none;
  padding-top: 2px;
}
.cli-input {
  flex: 1;
  height: 36px;
  box-sizing: border-box;
  background-color: #fff;
  border-bottom: 2px solid #8a8a8a;
}

/* status bar */
.statusbar {
  flex: 1;
  display: flex;
  align-items: center;
  font-size: 23px;
  letter-spacing: -.05px;
  white-space: pre;
}
.statusbar span {
  height: 32px;
  line-height: 34px;
  box-sizing: border-box;
  border-right: 1px solid #d8d8d8;
}
.st-au {
  width: 157px;
  padding-left: 2px;
}
.st-down {
  width: 76px;
  padding-left: 6px;
}
.st-disk {
  width: 175px;
  padding-left: 6px;
}
```
